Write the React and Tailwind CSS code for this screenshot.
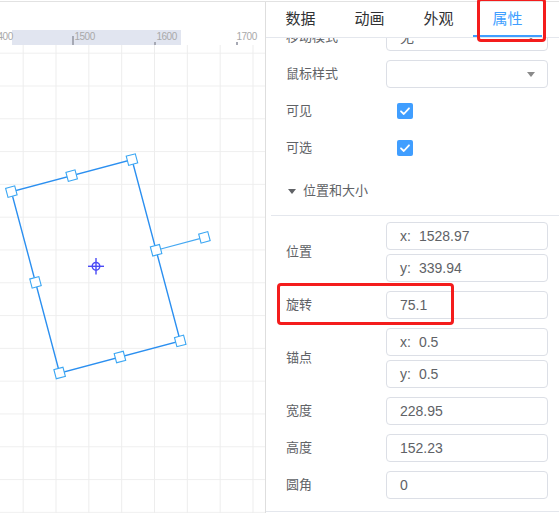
import React from 'react';

const tabs = ['数据', '动画', '外观', '属性'];

function Box({ children, className = '' }) {
  return (
    <div className={`h-[28px] border border-[#dcdfe6] rounded-[4px] pl-[13px] pr-[12px] flex items-center text-[14px] text-[#606266] bg-white ${className}`}>
      {children}
    </div>
  );
}

function Row({ label, children }) {
  return (
    <div className="flex items-center">
      <div className="w-[100px] shrink-0 text-[13px] text-[#606266]">{label}</div>
      <div className="w-[162px] flex flex-col gap-[4px]">{children}</div>
    </div>
  );
}

function Caret() {
  return <span className="ml-auto w-0 h-0 border-x-[4px] border-t-[5px] border-x-transparent border-t-[#8a8a8a]" />;
}

function Checkbox() {
  return (
    <div className="h-[28px] flex items-center pl-[11px]">
      <div className="w-[16px] h-[16px] rounded-[2px] bg-[#409eff] flex items-center justify-center">
        <svg width="16" height="16" viewBox="0 0 16 16">
          <polyline points="4,8.3 6.8,11 12,5.3" fill="none" stroke="#fff" strokeWidth="1.8" strokeLinecap="round" strokeLinejoin="round" />
        </svg>
      </div>
    </div>
  );
}

function XY({ axis, value }) {
  return (
    <Box>
      <span>{axis}:</span>
      <span className="ml-[8px]">{value}</span>
    </Box>
  );
}

function Shape() {
  const w = 187.7;
  const h = 124.8;
  const pts = [
    [-w / 2, -h / 2], [0, -h / 2], [w / 2, -h / 2],
    [w / 2, 0], [w / 2, h / 2], [0, h / 2],
    [-w / 2, h / 2], [-w / 2, 0], [0, -h / 2 - 50],
  ];
  return (
    <svg className="absolute left-0 top-0" width="265" height="511" viewBox="0 0 265 511">
      <g transform="translate(95.8 264.3) rotate(75.1)">
        <rect x={-w / 2} y={-h / 2} width={w} height={h} fill="none" stroke="#2b8ff0" strokeWidth="1.4" />
        <line x1="0" y1={-h / 2} x2="0" y2={-h / 2 - 50} stroke="#45a8f2" strokeWidth="1.2" />
        {pts.map(([x, y], i) => (
          <rect key={i} x={x - 4.7} y={y - 4.7} width="9.4" height="9.4" fill="#fff" stroke="#3aa6f3" strokeWidth="1.1" />
        ))}
      </g>
      <g transform="translate(96 264.3)" stroke="#4a4af5" strokeWidth="1.4" fill="none">
        <circle r="3.8" />
        <line x1="-8" y1="0" x2="8" y2="0" />
        <line x1="0" y1="-8.3" x2="0" y2="8.3" />
      </g>
    </svg>
  );
}

function Canvas() {
  const labels = [
    { t: '1400', x: -7.5 },
    { t: '1500', x: 74.5 },
    { t: '1600', x: 156.5 },
    { t: '1700', x: 236.5 },
  ];
  return (
    <div className="relative w-[265px] shrink-0 flex flex-col overflow-hidden bg-white">
      <div className="relative h-[43px] shrink-0">
        <div className="absolute left-[12px] top-[28px] w-[169px] h-[15px] bg-[#e1e5f0]" />
        {labels.map((l) => (
          <span
            key={l.t}
            className="absolute top-[29px] text-[10px] leading-[12px] tracking-[-0.5px] text-[#a9a9a9]"
            style={{ left: l.x }}
          >
            {l.t}
          </span>
        ))}
        <div className="absolute left-[72px] top-[34px] w-[1.5px] h-[9px] bg-[#a6a9b4]" />
        <div className="absolute left-[154px] top-[40px] w-[1.5px] h-[3px] bg-[#a6a9b4]" />
        <div className="absolute left-[236px] top-[40px] w-[1.5px] h-[3px] bg-[#a6a9b4]" />
      </div>
      <div className="flex-1 bg-[image:linear-gradient(to_right,#ededed_1px,transparent_1px),linear-gradient(to_bottom,#efefef_1px,transparent_1px)] bg-[size:32.83px_32.8px] bg-[position:22.7px_7.7px]" />
      <Shape />
    </div>
  );
}

function Panel() {
  return (
    <div className="flex-1 border-l border-[#dedede] flex flex-col bg-white min-w-0">
      <div className="relative z-10 h-[36px] shrink-0 border-b border-[#e4e7ed] flex bg-white">
        {tabs.map((t, i) => (
          <div
            key={t}
            className={`relative w-[69px] flex items-center justify-center text-[15px] ${i === 3 ? 'text-[#409eff]' : 'text-[#303133]'}`}
          >
            {t}
            {i === 3 && <div className="absolute left-0 right-0 bottom-0 h-[2px] bg-[#409eff]" />}
          </div>
        ))}
      </div>
      <div className="flex-1 overflow-hidden">
        <div className="-mt-[15px] border-b border-[#e4e7ed]">
          <div className="pl-[20px] flex flex-col gap-[9px]">
            <Row label="移动模式">
              <Box>
                <span>无</span>
                <Caret />
              </Box>
            </Row>
            <Row label="鼠标样式">
              <Box>
                <Caret />
              </Box>
            </Row>
            <Row label="可见">
              <Checkbox />
            </Row>
            <Row label="可选">
              <Checkbox />
            </Row>
          </div>
          <div className="ml-[5px] h-[54px] border-b border-[#e4e7ed] pt-[5px] pl-[17px] flex items-center gap-[7px] text-[13px] text-[#606266]">
            <span className="w-0 h-0 border-x-[4px] border-t-[5px] border-x-transparent border-t-[#606266]" />
            <span>位置和大小</span>
          </div>
          <div className="pl-[20px] pt-[6px] pb-[12px] flex flex-col gap-[9px]">
            <Row label="位置">
              <XY axis="x" value="1528.97" />
              <XY axis="y" value="339.94" />
            </Row>
            <Row label="旋转">
              <Box>75.1</Box>
            </Row>
            <Row label="锚点">
              <XY axis="x" value="0.5" />
              <XY axis="y" value="0.5" />
            </Row>
            <Row label="宽度">
              <Box>228.95</Box>
            </Row>
            <Row label="高度">
              <Box>152.23</Box>
            </Row>
            <Row label="圆角">
              <Box>0</Box>
            </Row>
          </div>
        </div>
      </div>
    </div>
  );
}

export default function App() {
  return (
    <div className="relative w-[559px] h-[513px] overflow-hidden bg-white pt-px font-['Liberation_Sans','Noto_Sans_CJK_SC',sans-serif]">
      <div className="h-full border-t border-[#e2e2e2] flex">
        <Canvas />
        <Panel />
      </div>
      <div className="absolute left-[477px] top-[-2px] w-[69px] h-[44px] border-[3px] border-[#f41c1c] rounded-[4px] z-20" />
      <div className="absolute left-[277px] top-[283px] w-[177px] h-[42px] border-[3px] border-[#f41c1c] rounded-[4px] z-20" />
    </div>
  );
}
